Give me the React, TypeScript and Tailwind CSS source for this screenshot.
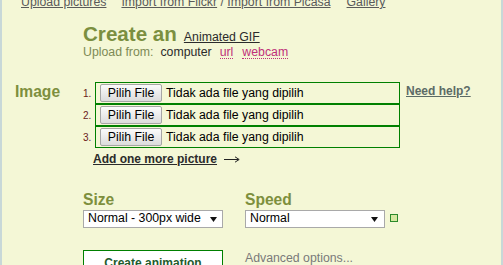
const rows = [1, 2, 3]

function FileRow({ n, help }: { n: number; help?: boolean }) {
  return (
    <div className="flex items-center h-[22px]">
      <span className="w-[12px] pr-[4px] text-right text-[10px] leading-[12px] pt-[1px] text-[#6b1a1a]">
        {n}.
      </span>
      <div className="w-[305px] h-[22px] border border-[#008000] flex items-center pl-[4px]">
        <button className="w-[62px] h-[18px] rounded-[2px] border border-[#a6a6a6] bg-gradient-to-b from-[#fbfbfb] to-[#dcdcdc] text-[12.3px] leading-[14px] text-black">
          Pilih File
        </button>
        <span className="ml-[4px] text-[12.3px] leading-[14px] text-black">
          Tidak ada file yang dipilih
        </span>
      </div>
      {help && (
        <a className="self-start mt-[2px] ml-[6px] text-[12px] leading-[14px] font-bold underline text-[#5c6b66]">
          Need help?
        </a>
      )}
    </div>
  )
}

function Select({ label, arrowPad }: { label: string; arrowPad: string }) {
  return (
    <div
      className={`w-[140px] h-[18px] border border-[#a9a9a9] bg-white flex justify-between pl-[4px] ${arrowPad}`}
    >
      <span className="self-start text-[12.3px] leading-[15px] text-black">{label}</span>
      <svg width="7" height="5" viewBox="0 0 7 5" className="self-center">
        <polygon points="0,0 7,0 3.5,5" fill="#111" />
      </svg>
    </div>
  )
}

export default function App() {
  return (
    <div className="w-[503px] h-[265px] overflow-hidden bg-[#f4f7d6] border-x-2 border-[#c8d8d8] flex flex-col font-['Liberation_Sans',Arial,sans-serif] text-[12.3px]">
      <nav className="-mt-[5px] h-[14px] leading-[14px] flex pl-[19px] text-[#5a5a5a] shrink-0">
        <a className="underline">Upload pictures</a>
        <span className="ml-[15px]">
          <a className="underline">Import from Flickr</a> / <a className="underline">Import from Picasa</a>
        </span>
        <a className="underline ml-[16px]">Gallery</a>
      </nav>

      <header className="mt-[14px] ml-[81px]">
        <div className="h-[22px] leading-[22px] flex items-baseline">
          <h1 className="text-[20.6px] font-bold text-[#7b8f3f]">Create an</h1>
          <a className="ml-[7px] underline text-[#2b2b2b]">Animated GIF</a>
        </div>
        <div className="h-[14px] leading-[14px] flex items-baseline">
          <span className="text-[#7d8a55]">Upload from:</span>
          <span className="ml-[7px] text-[#2b2b2b]">computer</span>
          <a className="ml-[8px] text-[#c0307a] border-b border-dotted border-[#c0307a] leading-none">url</a>
          <a className="ml-[9px] text-[#c0307a] border-b border-dotted border-[#c0307a] leading-none">webcam</a>
        </div>
      </header>

      <section className="mt-[23px] grid grid-cols-[81px_1fr]">
        <h2 className="pl-[13px] pt-[1px] text-[15.6px] leading-[18px] font-bold text-[#7d8f3d]">Image</h2>
        <div>
          {rows.map((n) => (
            <FileRow key={n} n={n} help={n === 1} />
          ))}
          <div className="mt-[4px] ml-[10px] flex items-center">
            <a className="text-[12px] leading-[14px] font-bold underline text-[#2b2b2b]">Add one more picture</a>
            <svg width="16" height="7" viewBox="0 0 16 7" className="ml-[7px]">
              <line x1="0" y1="3.5" x2="14.5" y2="3.5" stroke="#222" strokeWidth="1" />
              <path d="M11 0.8 L15.2 3.5 L11 6.2" fill="none" stroke="#222" strokeWidth="1" />
            </svg>
          </div>
        </div>
      </section>

      <section className="mt-[25px] ml-[81px] flex gap-[22px]">
        <div>
          <h3 className="h-[18px] text-[15.6px] leading-[18px] font-bold text-[#7d8f3d]">Size</h3>
          <div className="mt-[1px]">
            <Select label="Normal - 300px wide" arrowPad="pr-[5px]" />
          </div>
        </div>
        <div>
          <h3 className="h-[18px] text-[15.6px] leading-[18px] font-bold text-[#7d8f3d]">Speed</h3>
          <div className="mt-[1px] flex items-center">
            <Select label="Normal" arrowPad="pr-[6px]" />
            <span className="ml-[5px] -mt-[2px] w-[8px] h-[8px] border border-[#2a8a2a] bg-[#d6e8a0]" />
          </div>
        </div>
      </section>

      <section className="mt-[22px] ml-[81px] flex gap-[22px] shrink-0">
        <button className="w-[140px] h-[24px] border border-[#008000] bg-white pt-[1px] text-[12px] leading-[14px] font-bold text-[#1f5b2d] self-start">
          Create animation
        </button>
        <a className="mt-[1px] leading-[14px] text-[#7a7a7a]">Advanced options...</a>
      </section>
    </div>
  )
}
